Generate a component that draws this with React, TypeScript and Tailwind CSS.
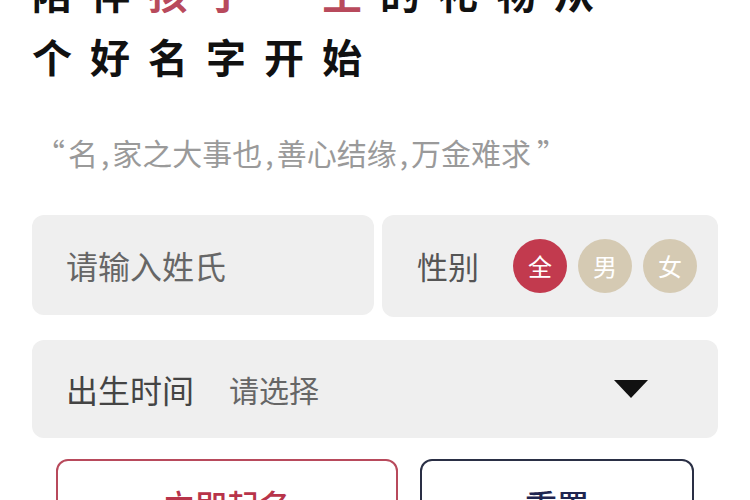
import React from "react";

const font = { fontFamily: '"Noto Sans CJK SC", "Noto Sans", sans-serif' };

const GenderDot = ({ label, active }: { label: string; active?: boolean }) => (
  <div
    className={`flex h-[54px] w-[54px] items-center justify-center rounded-full text-[24px] text-white ${
      active ? "bg-[#c23a4e]" : "bg-[#d5cab3]"
    }`}
  >
    {label}
  </div>
);

const Comma = () => <span className="mx-[3px]">,</span>;

const App = () => {
  return (
    <div className="h-[500px] w-[750px] overflow-hidden bg-white" style={font}>
      <div className="px-[32px]">
        {/* 标题 */}
        <div className="mt-[-40px] text-[40px] font-bold leading-[64px] tracking-[18px] text-[#111]">
          <div>
            陪伴<span className="text-[#b84a5c]">孩子一生</span>的礼物从
          </div>
          <div>个好名字开始</div>
        </div>

        <p className="mt-[44px] pl-[3px] text-[30px] leading-[40px] text-[#9a9a9a]">
          <span className="mr-[3px]">“</span>名<Comma />家之大事也<Comma />善心结缘<Comma />万金难求
          <span className="ml-[6px]">”</span>
        </p>

        {/* 姓氏 / 性别 */}
        <div className="mt-[43px] flex gap-[8px]">
          <div className="flex h-[100px] w-[342px] items-center rounded-[12px] bg-[#efefef] pl-[34px] text-[32px] text-[#666]">
            请输入姓氏
          </div>
          <div className="flex h-[102px] flex-1 items-center rounded-[12px] bg-[#efefef] pl-[35px]">
            <span className="mr-[34px] text-[31px] text-[#555]">性别</span>
            <div className="flex gap-[11px]">
              <GenderDot label="全" active />
              <GenderDot label="男" />
              <GenderDot label="女" />
            </div>
          </div>
        </div>

        {/* 出生时间 */}
        <div className="mt-[23px] flex h-[98px] items-center rounded-[12px] bg-[#efefef] pl-[34px] pr-[70px]">
          <span className="text-[32px] text-[#444]">出生时间</span>
          <span className="ml-[35px] text-[30px] text-[#666]">请选择</span>
          <svg className="ml-auto" width="34" height="18" viewBox="0 0 34 18">
            <polygon points="0,0 34,0 17,18" fill="#111" />
          </svg>
        </div>

        {/* 按钮 */}
        <div className="ml-[24px] mt-[21px] flex gap-[22px]">
          <button className="flex h-[90px] w-[342px] items-center justify-center rounded-[12px] border-2 border-[#b84a5c] text-[32px] font-medium text-[#b8344a]">
            立即起名
          </button>
          <button className="flex h-[90px] w-[274px] items-center justify-center rounded-[12px] border-2 border-[#2a2f45] text-[32px] font-medium text-[#1f2550]">
            重置
          </button>
        </div>
      </div>
    </div>
  );
};

export default App;
